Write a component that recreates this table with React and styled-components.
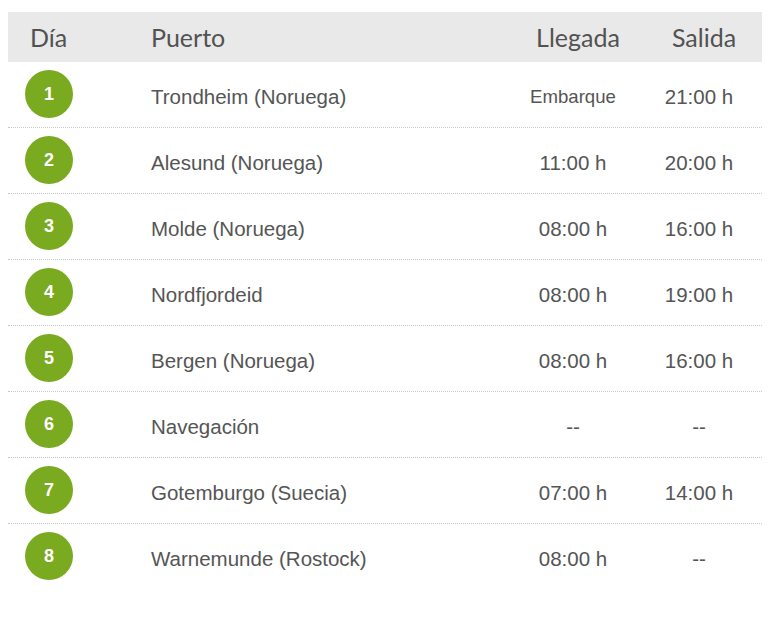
import React from 'react'
import styled, { createGlobalStyle } from 'styled-components'

const GlobalStyle = createGlobalStyle`
    body {
        margin: 0;
        background: #fff;
        font-family: "Liberation Sans", Arial, sans-serif;
    }
`

const Page = styled.div`
    padding: 12px 16px 0 8px;
`

const Table = styled.div`
    width: 754px;
    display: flex;
    flex-direction: column;
`

const Row = styled.div`
    display: grid;
    grid-template-columns: 135px 1fr 126px 126px;
    align-items: center;
    height: ${({ head }) => (head ? '50px' : '65px')};
    background-color: ${({ head }) => (head ? '#e9e9e9' : '#fff')};
    border-bottom: ${({ head, last }) => (head || last ? 'none' : '1px dotted #c8c8c8')};
`

const HeadCell = styled.div`
    font-family: Lato, "Open Sans", sans-serif;
    font-size: 25px;
    font-weight: 400;
    color: #525252;
    text-align: ${({ center }) => (center ? 'center' : 'left')};
    padding-left: ${({ pad }) => pad}px;
`

const Cell = styled.div`
    font-size: ${({ small }) => (small ? '18.6px' : '20.5px')};
    color: #555;
    text-align: ${({ center }) => (center ? 'center' : 'left')};
    padding-left: ${({ pad }) => pad || 0}px;
    padding-top: 5px;
`

const DayCircle = styled.div`
    box-sizing: border-box;
    width: 48px;
    height: 48px;
    margin-left: 17px;
    margin-bottom: 2px;
    padding-top: 2px;
    border-radius: 50%;
    background-color: #79aa1f;
    color: #fff;
    font-weight: 700;
    font-size: 18px;
    display: flex;
    align-items: center;
    justify-content: center;
`

const days = [
    { port: 'Trondheim (Noruega)', arrival: 'Embarque', departure: '21:00 h' },
    { port: 'Alesund (Noruega)', arrival: '11:00 h', departure: '20:00 h' },
    { port: 'Molde (Noruega)', arrival: '08:00 h', departure: '16:00 h' },
    { port: 'Nordfjordeid', arrival: '08:00 h', departure: '19:00 h' },
    { port: 'Bergen (Noruega)', arrival: '08:00 h', departure: '16:00 h' },
    { port: 'Navegación', arrival: '--', departure: '--' },
    { port: 'Gotemburgo (Suecia)', arrival: '07:00 h', departure: '14:00 h' },
    { port: 'Warnemunde (Rostock)', arrival: '08:00 h', departure: '--' },
]

const App = () => {
    return (
        <Page>
            <GlobalStyle />
            <Table>
                <Row head>
                    <HeadCell pad={22}>Día</HeadCell>
                    <HeadCell pad={8}>Puerto</HeadCell>
                    <HeadCell center pad={10}>Llegada</HeadCell>
                    <HeadCell center pad={10}>Salida</HeadCell>
                </Row>
                {days.map((day, index) => (
                    <Row key={index} last={index === days.length - 1}>
                        <DayCircle>{index + 1}</DayCircle>
                        <Cell pad={8}>{day.port}</Cell>
                        <Cell center small={day.arrival === 'Embarque'}>{day.arrival}</Cell>
                        <Cell center>{day.departure}</Cell>
                    </Row>
                ))}
            </Table>
        </Page>
    )
}

export default App
